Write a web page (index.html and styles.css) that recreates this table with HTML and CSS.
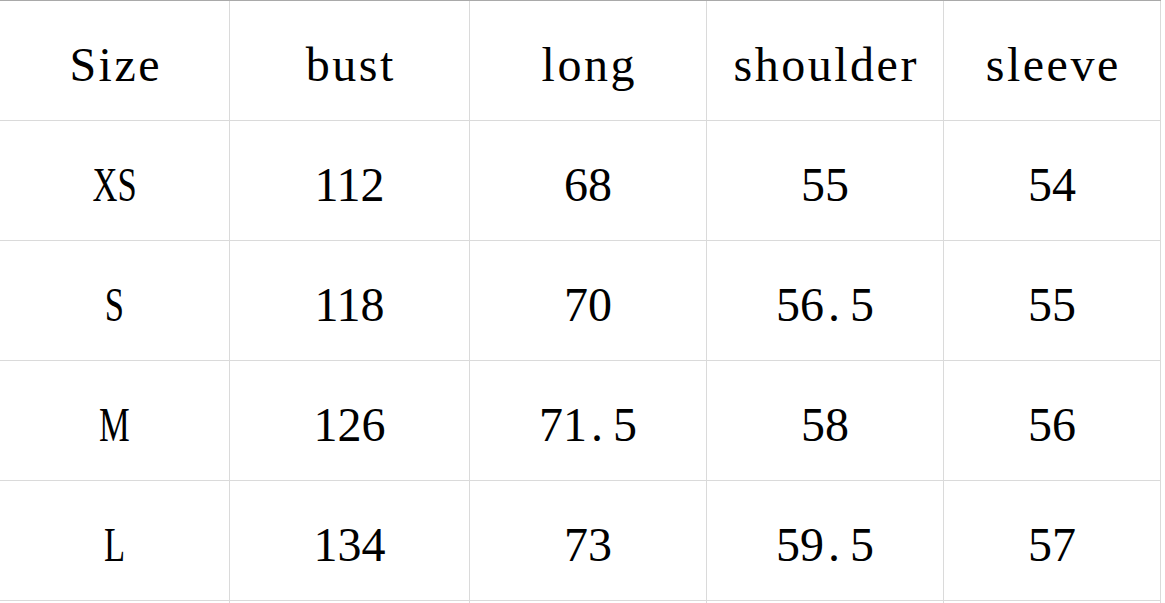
FILE: index.html
```html
<!DOCTYPE html>
<html>
<head>
<meta charset="utf-8">
<link rel="stylesheet" href="styles.css">
</head>
<body>
<div class="sheet">
  <div class="row head">
    <div class="cell"><span class="txt">Size</span></div>
    <div class="cell"><span class="txt">bust</span></div>
    <div class="cell"><span class="txt">long</span></div>
    <div class="cell"><span class="txt">shoulder</span></div>
    <div class="cell"><span class="txt">sleeve</span></div>
  </div>
  <div class="row">
    <div class="cell"><span class="cap">XS</span></div>
    <div class="cell">112</div>
    <div class="cell">68</div>
    <div class="cell">55</div>
    <div class="cell">54</div>
  </div>
  <div class="row">
    <div class="cell"><span class="cap">S</span></div>
    <div class="cell">118</div>
    <div class="cell">70</div>
    <div class="cell">56<span class="dot">.</span>5</div>
    <div class="cell">55</div>
  </div>
  <div class="row">
    <div class="cell"><span class="cap">M</span></div>
    <div class="cell">126</div>
    <div class="cell">71<span class="dot">.</span>5</div>
    <div class="cell">58</div>
    <div class="cell">56</div>
  </div>
  <div class="row">
    <div class="cell"><span class="cap">L</span></div>
    <div class="cell">134</div>
    <div class="cell">73</div>
    <div class="cell">59<span class="dot">.</span>5</div>
    <div class="cell">57</div>
  </div>
  <div class="row tail">
    <div class="cell"></div>
    <div class="cell"></div>
    <div class="cell"></div>
    <div class="cell"></div>
    <div class="cell"></div>
  </div>
</div>
</body>
</html>
```

FILE: styles.css
```css
html, body {
  margin: 0;
  padding: 0;
  background: #ffffff;
  overflow: hidden;
}

.sheet {
  width: 1161px;
  border-top: 1px solid #a9a9a9;
  font-family: "Liberation Serif", "Times New Roman", serif;
  font-size: 48px;
  color: #000000;
}

.row {
  display: grid;
  grid-template-columns: 230px 240px 237px 237px 217px;
  height: 120px;
}

.row.tail {
  height: 20px;
}

.cell {
  box-sizing: border-box;
  border-right: 1px solid #dadada;
  border-bottom: 1px solid #dadada;
  padding-top: 10px;
  line-height: 108px;
  text-align: center;
  white-space: nowrap;
}

.row.tail .cell {
  border-bottom: none;
}

.txt {
  letter-spacing: 2.5px;
  margin-right: -2.5px;
}

.cap {
  display: inline-block;
  transform: scaleX(0.72);
}

.dot {
  display: inline-block;
  width: 22px;
  text-align: left;
  padding-left: 4px;
}
```
